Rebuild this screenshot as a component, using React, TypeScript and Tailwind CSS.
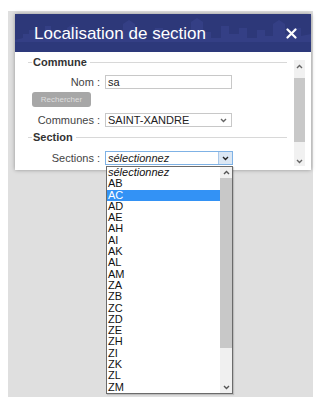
import React from 'react';

const SECTIONS = ['AB', 'AC', 'AD', 'AE', 'AH', 'AI', 'AK', 'AL', 'AM', 'ZA', 'ZB', 'ZC', 'ZD', 'ZE', 'ZH', 'ZI', 'ZK', 'ZL', 'ZM'];

function Chevron({ up = false, className = '' }: { up?: boolean; className?: string }) {
  return (
    <svg width="7" height="5" viewBox="0 0 7 5" className={className}>
      <path d={up ? 'M1 4 L3.5 1.5 L6 4' : 'M1 1 L3.5 3.5 L6 1'} fill="none" stroke="currentColor" strokeWidth="1.4" />
    </svg>
  );
}

function Legend({ label }: { label: string }) {
  return (
    <div className="flex items-center h-[12px] pr-[7px]">
      <div className="w-[4px] h-px bg-[#d8d8d8]" />
      <span className="px-[1px] text-[11px] leading-[12px] font-bold text-[#333]">{label}</span>
      <div className="flex-1 h-px bg-[#d8d8d8] ml-[2px]" />
    </div>
  );
}

function Row({ label, children }: { label: string; children: React.ReactNode }) {
  return (
    <div className="flex items-center h-[14px]">
      <span className="w-[72px] text-right text-[11px] text-[#444] leading-[14px]">{label}</span>
      <div className="ml-[5px]">{children}</div>
    </div>
  );
}

export default function App() {
  return (
    <div className="relative w-[324px] h-[406px] bg-white overflow-hidden font-['Liberation_Sans',Arial,sans-serif]">
      <div className="pt-[11px] pl-[8px]">
        <div className="w-[305px] h-[386px] bg-[#dfdfdf] pt-[3px] pl-[7px]">
          {/* Dialog */}
          <div className="w-[296px] bg-white shadow-[0_0_4px_rgba(0,0,0,0.35)]">
            {/* Header */}
            <div className="relative h-[38px] bg-[#2d3879] flex items-center pl-[19px] pr-[14px] overflow-hidden">
              <svg className="absolute inset-0" width="296" height="38" viewBox="0 0 296 38">
                <path
                  d="M0 38 L0 26 L8 24 L8 20 L14 20 L14 16 L20 16 L20 24 L30 22 L30 12 L36 12 L36 18 L44 18 L44 24 L52 24 L52 14 L58 10 L64 14 L64 26 L74 26 L74 18 L82 18 L82 24 L92 24 L92 16 L98 16 L98 22 L108 22 L108 10 L114 6 L120 10 L120 20 L130 20 L130 26 L140 26 L140 14 L148 14 L148 22 L158 22 L158 18 L166 18 L166 24 L176 24 L176 8 L182 4 L188 8 L188 18 L196 18 L196 24 L206 24 L206 12 L214 12 L214 20 L224 20 L224 14 L232 14 L232 24 L242 24 L242 16 L250 16 L250 22 L258 22 L258 10 L264 6 L270 10 L270 20 L278 20 L278 14 L286 14 L286 22 L296 20 L296 38 Z"
                  fill="#3a4690"
                  opacity="0.55"
                />
                <rect x="0" y="28" width="296" height="10" fill="#2d3879" opacity="0.85" />
              </svg>
              <span className="relative flex-1 text-[17px] leading-none text-white">Localisation de section</span>
              <svg className="relative" width="11" height="11" viewBox="0 0 11 11">
                <path d="M1.5 1.5 L9.5 9.5 M9.5 1.5 L1.5 9.5" stroke="white" strokeWidth="2.2" strokeLinecap="round" />
              </svg>
            </div>

            {/* Body */}
            <div className="flex h-[118px] pt-[6px] pb-[4px]">
              <div className="flex-1 overflow-hidden pl-[13px]">
                <div className="-mt-[2px]">
                  <Legend label="Commune" />
                  <div className="mt-[7px]">
                    <Row label="Nom :">
                      <div className="w-[127px] h-[14px] border border-[#c8c8c8] text-[11px] leading-[12px] pl-[2px] text-[#222]">sa</div>
                    </Row>
                  </div>
                  <button className="block mt-[3px] ml-[4px] w-[59px] h-[15px] rounded-[3px] bg-[#a7a7a7] text-[8px] leading-[15px] text-[#dedede] text-center">
                    Rechercher
                  </button>
                  <div className="mt-[6px]">
                    <Row label="Communes :">
                      <div className="w-[127px] h-[14px] border border-[#c8c8c8] flex items-center pl-[2px] pr-[4px]">
                        <span className="flex-1 text-[11px] leading-[12px] text-[#222]">SAINT-XANDRE</span>
                        <Chevron className="text-[#666]" />
                      </div>
                    </Row>
                  </div>
                  <div className="mt-[4px]">
                    <Legend label="Section" />
                  </div>
                  <div className="mt-[8px]">
                    <Row label="Sections :">
                      <div className="w-[128px] h-[14px] border border-[#7fb2e5] flex items-stretch">
                        <span className="flex-1 pl-[2px] text-[11px] leading-[12px] italic text-[#222]">sélectionnez</span>
                        <div className="w-[14px] bg-[#dbe7f4] border-l border-[#a9c8ea] flex items-center justify-center">
                          <Chevron className="text-[#222]" />
                        </div>
                      </div>
                    </Row>
                  </div>
                </div>
              </div>
              {/* Dialog scrollbar */}
              <div className="w-[11px] mr-[6px] mt-[2px] bg-[#f1f1f1] flex flex-col items-center">
                <div className="h-[12px] flex items-center"><Chevron up className="text-[#666]" /></div>
                <div className="w-full h-[64px] mt-[6px] bg-[#c8c8c8]" />
                <div className="flex-1" />
                <div className="h-[10px] flex items-center"><Chevron className="text-[#666]" /></div>
              </div>
            </div>
          </div>
        </div>
      </div>

      {/* Open dropdown list */}
      <div className="absolute left-[106px] top-[166px] w-[127px] h-[228px] border border-[#6b6b6b] bg-white flex shadow-[1px_1px_1px_rgba(0,0,0,0.15)]">
        <div className="flex-1 flex flex-col">
          <div className="h-[11.3px] pl-[1px] text-[11px] leading-[11.3px] italic text-[#111]">sélectionnez</div>
          {SECTIONS.map(s => (
            <div
              key={s}
              className={`h-[11.3px] pl-[1px] text-[11px] leading-[11.3px] ${s === 'AC' ? 'bg-[#3392f5] text-white' : 'text-[#111]'}`}
            >
              {s}
            </div>
          ))}
        </div>
        <div className="w-[12px] bg-[#f0f0f0] flex flex-col items-center">
          <div className="h-[11px] flex items-center"><Chevron up className="text-[#555]" /></div>
          <div className="w-full h-[170px] bg-[#c8c8c8]" />
          <div className="flex-1" />
          <div className="h-[11px] flex items-center"><Chevron className="text-[#555]" /></div>
        </div>
      </div>
    </div>
  );
}
